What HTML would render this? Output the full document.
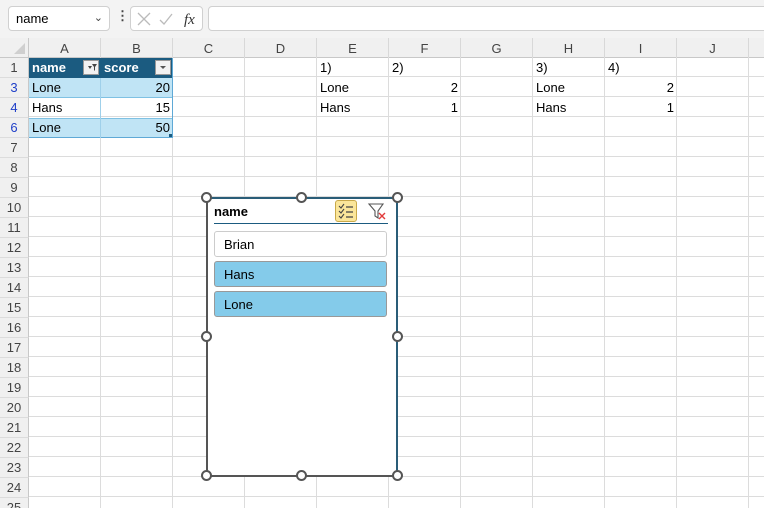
<!DOCTYPE html>
<html><head><style>
*{margin:0;padding:0;box-sizing:border-box}
html,body{width:764px;height:508px;overflow:hidden}
body{background:#fff;font-family:"Liberation Sans",Arial,sans-serif;font-size:13px;color:#000;position:relative}
.a{position:absolute}
.top{left:0;top:0;width:764px;height:38px;background:#f3f3f3}
.box{background:#fff;border:1px solid #d0d0d0;border-radius:4px}
.grid{left:29px;top:57px;width:735px;height:451px;
background-image:repeating-linear-gradient(to right,transparent 0 71px,#dcdcdc 71px 72px),repeating-linear-gradient(to bottom,transparent 0 19px,#dcdcdc 19px 20px);}
.ch{top:38px;height:20px;width:72px;text-align:center;line-height:21px;color:#444;font-size:13px;border-right:1px solid #d8d8d8;border-bottom:1px solid #c8c8c8;background:#f0f0f0}
.rh{left:0;width:29px;height:20px;line-height:20px;text-align:center;color:#444;background:#f0f0f0;border-right:1px solid #c8c8c8;border-bottom:1px solid #dcdcdc}
.c{height:20px;line-height:20px;padding:0 3px}
.r{text-align:right}
.h{width:11px;height:11px;border:2px solid #555;border-radius:50%;background:#fff}
.it{left:214px;width:173px;height:26px;border-radius:3px;line-height:26px;padding-left:9px;font-size:13px}
</style></head><body>
<div class="a top"></div>
<div class="a box" style="left:8px;top:6px;width:102px;height:25px;line-height:23px;padding-left:7px">name<span class="a" style="right:6px;top:0;color:#444;font-size:11px">&#8964;</span></div>
<div class="a" style="left:116px;top:8px;color:#444;font-weight:bold">&#8942;</div>
<div class="a box" style="left:130px;top:6px;width:73px;height:25px"></div>
<svg class="a" style="left:136px;top:11px" width="64" height="16"><path d="M2 2l12 12M14 2L2 14" stroke="#bbb" stroke-width="1.3"/><path d="M24 9l4 4 8-10" stroke="#bbb" stroke-width="1.3" fill="none"/><text x="48" y="13" font-family="Liberation Serif" font-style="italic" font-size="15" fill="#333">fx</text></svg>
<div class="a box" style="left:208px;top:6px;width:560px;height:25px"></div>
<div class="a" style="left:0;top:38px;width:29px;height:20px;background:#f0f0f0;border-right:1px solid #c8c8c8;border-bottom:1px solid #c8c8c8"><div class="a" style="right:3px;bottom:3px;width:0;height:0;border-left:11px solid transparent;border-bottom:11px solid #cfcfcf"></div></div>
<div class="a ch" style="left:29px">A</div><div class="a ch" style="left:101px">B</div><div class="a ch" style="left:173px">C</div><div class="a ch" style="left:245px">D</div><div class="a ch" style="left:317px">E</div><div class="a ch" style="left:389px">F</div><div class="a ch" style="left:461px">G</div><div class="a ch" style="left:533px">H</div><div class="a ch" style="left:605px">I</div><div class="a ch" style="left:677px">J</div><div class="a ch" style="left:749px"></div>
<div class="a grid"></div>
<div class="a rh" style="top:58px">1</div>
<div class="a rh" style="top:78px;color:#1f3fc8">3</div>
<div class="a rh" style="top:98px;color:#1f3fc8">4</div>
<div class="a rh" style="top:118px;color:#1f3fc8">6</div>
<div class="a rh" style="top:138px">7</div><div class="a rh" style="top:158px">8</div><div class="a rh" style="top:178px">9</div><div class="a rh" style="top:198px">10</div><div class="a rh" style="top:218px">11</div><div class="a rh" style="top:238px">12</div><div class="a rh" style="top:258px">13</div><div class="a rh" style="top:278px">14</div><div class="a rh" style="top:298px">15</div><div class="a rh" style="top:318px">16</div><div class="a rh" style="top:338px">17</div><div class="a rh" style="top:358px">18</div><div class="a rh" style="top:378px">19</div><div class="a rh" style="top:398px">20</div><div class="a rh" style="top:418px">21</div><div class="a rh" style="top:438px">22</div><div class="a rh" style="top:458px">23</div><div class="a rh" style="top:478px">24</div><div class="a rh" style="top:498px">25</div>
<div class="a" style="left:29px;top:58px;width:144px;height:20px;background:#1b5b80"></div>
<div class="a c" style="left:29px;top:58px;color:#fff;font-weight:bold">name</div>
<div class="a c" style="left:101px;top:58px;color:#fff;font-weight:bold">score</div>
<div class="a" style="left:83px;top:60px;width:16px;height:15px;background:#f2f2f2;border:1px solid #999"><svg width="14" height="13"><path d="M4 5l2 3 2-3zM8 3h5l-2 3v4l-1-1V6z" fill="#444"/></svg></div>
<div class="a" style="left:155px;top:60px;width:16px;height:15px;background:#f2f2f2;border:1px solid #999"><svg width="14" height="13"><path d="M4 5h6l-3 3z" fill="#555"/></svg></div>
<div class="a" style="left:29px;top:78px;width:144px;height:20px;background:#c0e4f5;border-bottom:1px solid #7fc1e3"></div>
<div class="a" style="left:29px;top:118px;width:144px;height:19px;background:#c0e4f5;border-top:1px solid #7fc1e3"></div>
<div class="a" style="left:172px;top:58px;width:1px;height:80px;background:#5fa9d6"></div>
<div class="a" style="left:29px;top:137px;width:144px;height:1px;background:#5fa9d6"></div>
<div class="a" style="left:100px;top:78px;width:1px;height:60px;background:#9fd0ea"></div>
<div class="a" style="left:169px;top:134px;width:3px;height:3px;background:#1b5b80"></div>
<div class="a c" style="left:29px;top:78px">Lone</div><div class="a c r" style="left:101px;top:78px;width:72px">20</div>
<div class="a c" style="left:29px;top:98px">Hans</div><div class="a c r" style="left:101px;top:98px;width:72px">15</div>
<div class="a c" style="left:29px;top:118px">Lone</div><div class="a c r" style="left:101px;top:118px;width:72px">50</div>
<div class="a c" style="left:317px;top:58px">1)</div><div class="a c" style="left:389px;top:58px">2)</div>
<div class="a c" style="left:533px;top:58px">3)</div><div class="a c" style="left:605px;top:58px">4)</div>
<div class="a c" style="left:317px;top:78px">Lone</div><div class="a c r" style="left:389px;top:78px;width:72px">2</div>
<div class="a c" style="left:317px;top:98px">Hans</div><div class="a c r" style="left:389px;top:98px;width:72px">1</div>
<div class="a c" style="left:533px;top:78px">Lone</div><div class="a c r" style="left:605px;top:78px;width:72px">2</div>
<div class="a c" style="left:533px;top:98px">Hans</div><div class="a c r" style="left:605px;top:98px;width:72px">1</div>
<div class="a" style="left:206px;top:197px;width:192px;height:280px;background:#fff;border:2px solid #2a5d78;border-left-color:#555;border-bottom-color:#555"></div>
<div class="a" style="left:214px;top:204px;font-weight:bold;font-size:13px">name</div>
<div class="a" style="left:214px;top:223px;width:174px;height:1px;background:#1b5b80"></div>
<div class="a" style="left:335px;top:200px;width:22px;height:22px;background:#fbe69a;border:1px solid #c9a94a;border-radius:3px"><svg width="20" height="20"><path d="M3 5l2 2 3-4M3 10l2 2 3-4M3 15l2 2 3-4" stroke="#444" fill="none" stroke-width="1.1"/><path d="M10 6h7M10 11h7M10 16h7" stroke="#444" stroke-width="1.2"/></svg></div>
<svg class="a" style="left:367px;top:201px" width="20" height="20"><path d="M2 3h14l-5 7v7l-3-2v-5z" stroke="#555" fill="none" stroke-width="1.1"/><path d="M12 12l6 6M18 12l-6 6" stroke="#e23b3b" stroke-width="1.4"/></svg>
<div class="a it" style="top:231px;border:1px solid #ccc;background:#fff">Brian</div>
<div class="a it" style="top:261px;border:1px solid #999;background:#84cbea">Hans</div>
<div class="a it" style="top:291px;border:1px solid #999;background:#84cbea">Lone</div>
<div class="a h" style="left:201px;top:192px"></div><div class="a h" style="left:296px;top:192px"></div><div class="a h" style="left:392px;top:192px"></div>
<div class="a h" style="left:201px;top:331px"></div><div class="a h" style="left:392px;top:331px"></div>
<div class="a h" style="left:201px;top:470px"></div><div class="a h" style="left:296px;top:470px"></div><div class="a h" style="left:392px;top:470px"></div>
</body></html>
